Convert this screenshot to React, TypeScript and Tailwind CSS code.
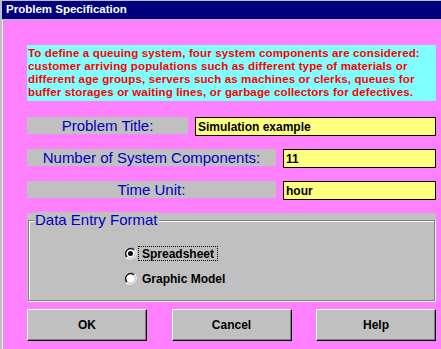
import React from "react";

const Radio = ({ checked }: { checked?: boolean }) => (
  <svg width="13" height="13" viewBox="0 0 13 13" className="shrink-0">
    <circle cx="6.5" cy="6.5" r="6" fill="#ffffff" />
    <path d="M2.3 10.7 A6 6 0 0 1 10.7 2.3" fill="none" stroke="#808080" strokeWidth="1.2" />
    <path d="M3.1 9.9 A4.8 4.8 0 0 1 9.9 3.1" fill="none" stroke="#000000" strokeWidth="1.2" />
    <path d="M10.7 2.3 A6 6 0 0 1 2.3 10.7" fill="none" stroke="#ffffff" strokeWidth="1.2" />
    <path d="M9.9 3.1 A4.8 4.8 0 0 1 3.1 9.9" fill="none" stroke="#c0c0c0" strokeWidth="1.2" />
    {checked && <circle cx="6.5" cy="6.5" r="2.5" fill="#000000" />}
  </svg>
);

const Field = ({ label, value, labelWidth }: { label: string; value: string; labelWidth: string }) => (
  <div className="flex items-start gap-[7px]">
    <div
      className={`${labelWidth} h-[17px] bg-[#c0c0c0] text-[15px] leading-none text-[#0000c0] flex items-center justify-center`}
    >
      {label}
    </div>
    <div className="flex-1 h-[19px] bg-[#ffff80] border border-black text-[12px] font-bold text-black pl-[2px] flex items-center leading-none">
      {value}
    </div>
  </div>
);

const Button = ({ children }: { children: React.ReactNode }) => (
  <button className="w-[120px] h-[32px] bg-[#c0c0c0] border-t border-l border-white border-b border-r border-b-black border-r-black shadow-[inset_-1px_-1px_0_#808080] text-[12px] font-bold text-black flex items-center justify-center">
    {children}
  </button>
);

export default function App() {
  return (
    <div className="w-[441px] h-[349px] bg-[#c0c0c0] pt-px pl-[2px] flex flex-col font-['Liberation_Sans',Arial,sans-serif] overflow-hidden">
      <div className="h-[18px] bg-[#000080] text-white font-bold text-[11.5px] pl-[4px] flex items-center leading-none">
        Problem Specification
      </div>
      <div className="h-px bg-[#c0c0c0]" />
      <div className="flex-1 bg-[#ff80ff] border-l border-white pl-[24px] pr-[5px] pt-[25px] flex flex-col">
        <div className="h-[56px] bg-[#80ffff] pl-px pt-[2px] text-[11.5px] leading-[13px] font-bold text-[#ff0000] tracking-[0.14px] whitespace-nowrap">
          To define a queuing system, four system components are considered:
          <br />
          customer arriving populations such as different type of materials or
          <br />
          different age groups, servers such as machines or clerks, queues for
          <br />
          buffer storages or waiting lines, or garbage collectors for defectives.
        </div>

        <div className="mt-[16px] flex flex-col gap-[13px]">
          <Field label="Problem Title:" value="Simulation example" labelWidth="w-[161px]" />
          <Field label="Number of System Components:" value="11" labelWidth="w-[249px]" />
          <Field label="Time Unit:" value="hour" labelWidth="w-[249px]" />
        </div>

        <div className="mt-[13px] h-[89px] bg-[#c0c0c0] px-px pt-[7px] pb-px flex flex-col">
          <div className="relative flex-1 border border-[#808080] shadow-[1px_1px_0_#ffffff,inset_1px_1px_0_#ffffff] flex flex-col pl-[95px] pt-[25px] gap-[10px]">
            <span className="absolute left-[5px] top-[-9px] bg-[#c0c0c0] px-px text-[15px] leading-[16px] text-[#0000c0]">
              Data Entry Format
            </span>
            <div className="flex items-center h-[15px]">
              <Radio checked />
              <span className="ml-[1px] px-[3px] h-[15px] border border-dotted border-black text-[12px] font-bold text-black flex items-center leading-none">
                Spreadsheet
              </span>
            </div>
            <div className="flex items-center h-[15px]">
              <Radio />
              <span className="ml-[5px] text-[12px] font-bold text-black leading-none">Graphic Model</span>
            </div>
          </div>
        </div>

        <div className="mt-[7px] flex justify-between">
          <Button>OK</Button>
          <Button>Cancel</Button>
          <Button>Help</Button>
        </div>
      </div>
    </div>
  );
}
